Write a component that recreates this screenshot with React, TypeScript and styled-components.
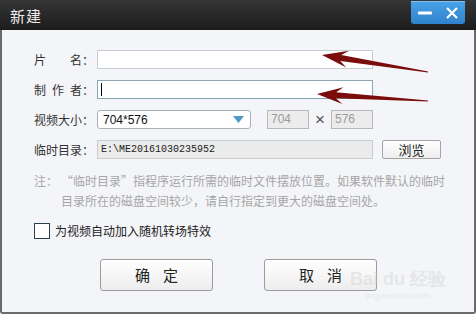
import styled, { createGlobalStyle } from "styled-components";

const Global = createGlobalStyle`
  html, body {
    margin: 0;
    padding: 0;
    background: #f4f5f8;
  }
  body {
    font-family: "Noto Sans CJK SC", "Liberation Sans", sans-serif;
  }
`;

const Window = styled.div`
  position: relative;
  width: 476px;
  height: 314px;
  display: flex;
  flex-direction: column;
  overflow: hidden;
`;

const TitleBar = styled.div`
  height: 30px;
  flex: none;
  display: flex;
  align-items: flex-start;
  justify-content: space-between;
  background: linear-gradient(#353535, #1c1c1c);
  padding: 0 11px 0 10px;

  & h1 {
    margin: 7px 0 0;
    font-size: 15px;
    font-weight: 400;
    line-height: 18px;
    color: #ececec;
    letter-spacing: 1px;
  }
`;

const Controls = styled.div`
  display: flex;
  height: 23px;
  margin-top: 1px;
  border-radius: 0 0 3px 3px;
  overflow: hidden;
  background: linear-gradient(#4aa3e8, #2f82cc);
  box-shadow: inset 0 1px 0 rgba(255, 255, 255, 0.3);
`;

const CtrlButton = styled.div<{ wide?: number }>`
  width: ${({ wide }) => wide ?? 27}px;
  display: flex;
  align-items: center;
  justify-content: center;
`;

const Body = styled.div`
  flex: 1;
  background: #f4f5f8;
  border: 2px solid #6a6a6a;
  border-top: none;
  border-radius: 0 0 3px 3px;
  padding: 20px 0 0 32px;
  display: flex;
  flex-direction: column;
`;

const Form = styled.div`
  display: flex;
  flex-direction: column;
  gap: 11px;
`;

const Row = styled.div`
  display: flex;
  align-items: center;
  height: 19px;
`;

const Label = styled.div`
  width: 63px;
  display: flex;
  font-size: 12px;
  color: #333;
  line-height: 19px;

  & span {
    width: 48px;
    text-align: justify;
    text-align-last: justify;
  }
`;

const Field = styled.div<{ w: number; focus?: boolean; muted?: boolean }>`
  box-sizing: border-box;
  width: ${({ w }) => w}px;
  height: 19px;
  border: 1px solid ${({ focus }) => (focus ? "#8aa6b6" : "#c8cdd2")};
  background: ${({ muted }) => (muted ? "#ebebeb" : "#ffffff")};
  display: flex;
  align-items: center;
  padding-left: 3px;
`;

const Caret = styled.div`
  width: 1px;
  height: 13px;
  background: #000;
`;

const Select = styled.div`
  box-sizing: border-box;
  width: 154px;
  height: 19px;
  border: 1px solid #a9b0b6;
  border-radius: 3px;
  background: #fff;
  display: flex;
  align-items: center;
  justify-content: space-between;
  padding: 0 6px 0 5px;
  font-family: "Liberation Sans", sans-serif;
  font-size: 12px;
  color: #111;
`;

const SizeBox = styled.div`
  box-sizing: border-box;
  width: 42px;
  height: 19px;
  border: 1px solid #b8b8b8;
  background: #ececec;
  font-family: "Liberation Sans", sans-serif;
  font-size: 12px;
  color: #9a9a9a;
  padding-left: 3px;
  line-height: 17px;
`;

const Gap = styled.span<{ w: number }>`
  width: ${({ w }) => w}px;
`;

const Times = styled.span`
  width: 22px;
  text-align: center;
  font-family: "Liberation Sans", sans-serif;
  font-size: 17px;
  line-height: 19px;
  color: #555;
`;

const PathText = styled.span`
  font-family: "Liberation Mono", monospace;
  font-size: 10px;
  color: #222;
`;

const SmallButton = styled.div`
  box-sizing: border-box;
  margin-left: 9px;
  width: 59px;
  height: 19px;
  border: 1px solid #a4a4a4;
  border-radius: 2px;
  background: linear-gradient(#ffffff, #eeeeee);
  font-size: 13px;
  color: #222;
  text-align: center;
  line-height: 17px;
`;

const Note = styled.div`
  display: flex;
  margin-top: 12px;
  font-size: 12px;
  line-height: 20px;
  color: #a6a6a6;

  & b {
    font-weight: 400;
    width: 27px;
    flex: none;
  }
`;

const Check = styled.label`
  display: flex;
  align-items: center;
  gap: 5px;
  margin-top: 11px;
  font-size: 12px;
  color: #222;
`;

const Box = styled.span`
  box-sizing: border-box;
  width: 16px;
  height: 16px;
  border: 1px solid #2b3f4c;
  background: #fff;
`;

const Actions = styled.div`
  display: flex;
  gap: 51px;
  margin-top: 20px;
  padding-left: 66px;
`;

const Button = styled.div`
  box-sizing: border-box;
  width: 113px;
  height: 32px;
  border: 1px solid #9c9c9c;
  border-radius: 3px;
  background: linear-gradient(#ffffff, #ededed);
  font-size: 15px;
  color: #222;
  letter-spacing: 13px;
  text-indent: 13px;
  text-align: center;
  line-height: 30px;
`;

const Arrows = styled.svg`
  position: absolute;
  left: 0;
  top: 0;
  pointer-events: none;
`;

const Watermark = styled.div`
  position: absolute;
  right: 30px;
  bottom: 14px;
  text-align: center;
  color: rgba(205, 205, 210, 0.4);
  font-family: "Liberation Sans", sans-serif;
  pointer-events: none;

  & div:first-child {
    font-size: 18px;
    font-weight: 700;
  }
  & div:last-child {
    font-size: 8px;
  }
`;

function Arrow({ tip, tail }: { tip: [number, number]; tail: [number, number] }) {
  const dx = tail[0] - tip[0];
  const dy = tail[1] - tip[1];
  const len = Math.hypot(dx, dy);
  const ux = dx / len;
  const uy = dy / len;
  const px = -uy;
  const py = ux;
  const hb = [tip[0] + ux * 26, tip[1] + uy * 26];
  const hn = [tip[0] + ux * 19, tip[1] + uy * 19];
  const pts = [
    tip,
    [hb[0] + px * 8.5, hb[1] + py * 8.5],
    [hn[0] + px * 3, hn[1] + py * 3],
    [tail[0] + px * 0.6, tail[1] + py * 0.6],
    [tail[0] - px * 0.6, tail[1] - py * 0.6],
    [hn[0] - px * 3, hn[1] - py * 3],
    [hb[0] - px * 8.5, hb[1] - py * 8.5],
  ];
  return <polygon points={pts.map((p) => p.join(",")).join(" ")} fill="#7b0c0c" />;
}

export default function App() {
  return (
    <>
      <Global />
      <Window>
        <TitleBar>
          <h1>新建</h1>
          <Controls>
            <CtrlButton>
              <svg width="14" height="4" viewBox="0 0 14 4">
                <rect x="0" y="0.5" width="14" height="3" rx="1" fill="#fff" />
              </svg>
            </CtrlButton>
            <CtrlButton wide={27}>
              <svg width="12" height="12" viewBox="0 0 12 12">
                <path d="M1 1 L11 11 M11 1 L1 11" stroke="#fff" strokeWidth="2.2" />
              </svg>
            </CtrlButton>
          </Controls>
        </TitleBar>
        <Body>
          <Form>
            <Row>
              <Label>
                <span>片 名</span>：
              </Label>
              <Field w={276} />
            </Row>
            <Row>
              <Label>
                <span>制 作 者</span>：
              </Label>
              <Field w={276} focus>
                <Caret />
              </Field>
            </Row>
            <Row>
              <Label>
                <span>视频大小</span>：
              </Label>
              <Select>
                704*576
                <svg width="11" height="7" viewBox="0 0 11 7">
                  <path d="M0 0 H11 L5.5 7 Z" fill="#4f9ac4" />
                </svg>
              </Select>
              <Gap w={16} />
              <SizeBox>704</SizeBox>
              <Times>×</Times>
              <SizeBox>576</SizeBox>
            </Row>
            <Row>
              <Label>
                <span>临时目录</span>：
              </Label>
              <Field w={276} muted>
                <PathText>E:\ME20161030235952</PathText>
              </Field>
              <SmallButton>浏览</SmallButton>
            </Row>
          </Form>
          <Note>
            <b>注：</b>
            <div>
              “临时目录”指程序运行所需的临时文件摆放位置。如果软件默认的临时
              <br />
              目录所在的磁盘空间较少，请自行指定到更大的磁盘空间处。
            </div>
          </Note>
          <Check>
            <Box />
            为视频自动加入随机转场特效
          </Check>
          <Actions>
            <Button>确定</Button>
            <Button>取消</Button>
          </Actions>
        </Body>
        <Arrows width="476" height="314" viewBox="0 0 476 314">
          <Arrow tip={[322, 55]} tail={[428, 72]} />
          <Arrow tip={[317, 94]} tail={[428, 101]} />
        </Arrows>
        <Watermark>
          <div>Bai du 经验</div>
          <div>jingyan.baidu.com</div>
        </Watermark>
      </Window>
    </>
  );
}
